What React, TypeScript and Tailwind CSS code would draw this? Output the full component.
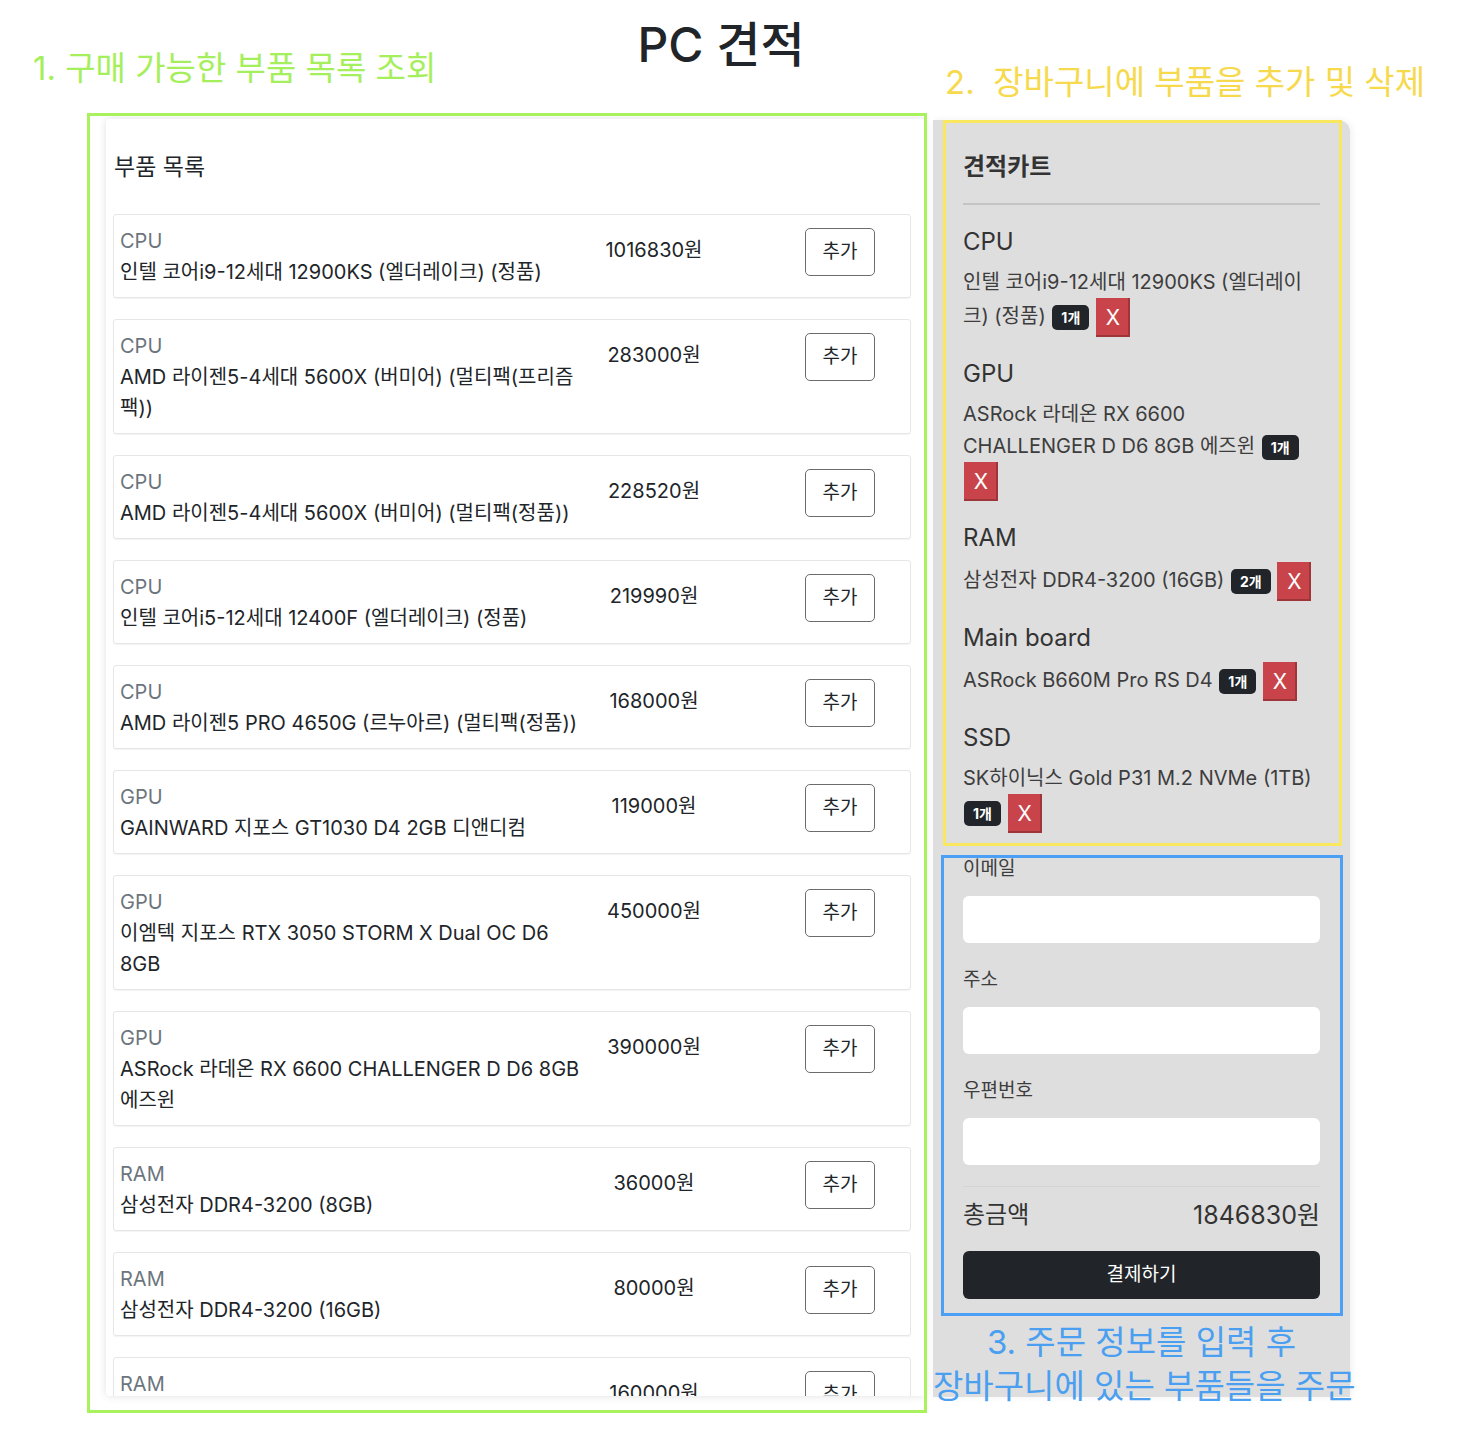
import React from "react";

const parts = [
  { category: "CPU", name: "인텔 코어i9-12세대 12900KS (엘더레이크) (정품)", price: 1016830 },
  { category: "CPU", name: "AMD 라이젠5-4세대 5600X (버미어) (멀티팩(프리즘팩))", price: 283000 },
  { category: "CPU", name: "AMD 라이젠5-4세대 5600X (버미어) (멀티팩(정품))", price: 228520 },
  { category: "CPU", name: "인텔 코어i5-12세대 12400F (엘더레이크) (정품)", price: 219990 },
  { category: "CPU", name: "AMD 라이젠5 PRO 4650G (르누아르) (멀티팩(정품))", price: 168000 },
  { category: "GPU", name: "GAINWARD 지포스 GT1030 D4 2GB 디앤디컴", price: 119000 },
  { category: "GPU", name: "이엠텍 지포스 RTX 3050 STORM X Dual OC D6 8GB", price: 450000 },
  { category: "GPU", name: "ASRock 라데온 RX 6600 CHALLENGER D D6 8GB 에즈윈", price: 390000 },
  { category: "RAM", name: "삼성전자 DDR4-3200 (8GB)", price: 36000 },
  { category: "RAM", name: "삼성전자 DDR4-3200 (16GB)", price: 80000 },
  { category: "RAM", name: "삼성전자 DDR4-3200 (32GB)", price: 160000 },
];

const cart = [
  { category: "CPU", name: "인텔 코어i9-12세대 12900KS (엘더레이크) (정품)", qty: 1 },
  { category: "GPU", name: "ASRock 라데온 RX 6600 CHALLENGER D D6 8GB 에즈윈", qty: 1 },
  { category: "RAM", name: "삼성전자 DDR4-3200 (16GB)", qty: 2 },
  { category: "Main board", name: "ASRock B660M Pro RS D4", qty: 1 },
  { category: "SSD", name: "SK하이닉스 Gold P31 M.2 NVMe (1TB)", qty: 1 },
];

const fields = ["이메일", "주소", "우편번호"];

const App = () => {
  return (
    <div className="relative w-[1462px] h-[1444px] overflow-hidden bg-white font-['Inter','Noto_Sans_CJK_KR',sans-serif]">
      {/* header */}
      <div className="h-[119px] pt-[16px] pr-[20px] text-center">
        <h1 className="text-[48px] leading-[58px] font-medium text-[#212529]">PC 견적</h1>
      </div>

      <div className="flex items-start">
        {/* parts list */}
        <div className="ml-[106px] w-[819px] h-[1277px] overflow-hidden bg-white rounded-[4px] shadow-[0_0_8px_rgba(0,0,0,0.12)] pt-[32px] pl-[7px] pr-[14px]">
          <h2 className="text-[23px] leading-[32px] text-[#212529] mb-[31px] pl-[1px]">부품 목록</h2>
          <div className="flex flex-col gap-[21px]">
            {parts.map((part, index) => (
              <div
                key={index}
                className="flex items-start border border-[#e6e6e6] rounded-[3px] pl-[6px] pt-[11px] pb-[9px] shadow-[0_1px_1px_rgba(0,0,0,0.05)]"
              >
                <div className="w-[466px] text-[20px] leading-[31px]">
                  <div className="text-[#6c757d]">{part.category}</div>
                  <div className="text-[#212529]">{part.name}</div>
                </div>
                <div className="w-[136px] mt-[9px] text-center text-[20px] leading-[31px] text-[#212529]">
                  {part.price}원
                </div>
                <button className="ml-auto mr-[35px] mt-[2px] w-[70px] h-[48px] bg-white border border-[#6c6c6c] rounded-[5px] text-[19px] text-[#212529]">
                  추가
                </button>
              </div>
            ))}
          </div>
        </div>

        {/* cart */}
        <div className="ml-[8px] mt-[1px] w-[417px] h-[1277px] bg-[#dedede] rounded-tr-[12px] shadow-[2px_0_6px_rgba(0,0,0,0.06)] pt-[31px] px-[30px]">
          <h2 className="text-[24px] leading-[32px] font-bold text-[#333]">견적카트</h2>
          <hr className="mt-[20px] mb-[21px] border-0 border-t-2 border-[#c4c4c4]" />

          <div className="flex flex-col gap-[21px]">
            {cart.map((item, index) => (
              <div key={index}>
                <h3 className="text-[24px] leading-[32px] text-[#333] mb-[8px]">{item.category}</h3>
                <div className="text-[20px] leading-[32px] text-[#3d3d3d]">
                  {item.name}{" "}
                  <span className="inline-block align-middle ml-[1px] px-[9px] rounded-[5px] bg-[#212529] text-white text-[14px] leading-[25px] font-bold">
                    {item.qty}개
                  </span>{" "}
                  <button className="inline-block align-middle ml-[1px] w-[34px] h-[39px] bg-[#c9444a] text-white text-[21px] leading-[39px] shadow-[inset_-2px_-2px_0_rgba(0,0,0,0.22)]">
                    X
                  </button>
                </div>
              </div>
            ))}
          </div>

          {/* order form */}
          <div className="mt-[20px]">
            {fields.map((label) => (
              <div key={label} className="mb-[21px]">
                <div className="text-[19px] leading-[32px] text-[#3d3d3d] mb-[11px]">{label}</div>
                <input className="block w-full h-[47px] rounded-[6px] bg-white outline-none px-3" />
              </div>
            ))}
            <div className="border-t border-[#d4d4d4] pt-[12px] flex items-center justify-between text-[24px] leading-[32px] text-[#333]">
              <span>총금액</span>
              <span className="text-[25px]">1846830원</span>
            </div>
            <button className="mt-[20px] w-full h-[48px] rounded-[6px] bg-[#212529] text-white text-[19px]">
              결제하기
            </button>
          </div>
        </div>
      </div>

      {/* annotations */}
      <div className="absolute left-[33px] top-[48px] text-[33px] leading-[40px] text-[#a6ef5c]">
        1. 구매 가능한 부품 목록 조회
      </div>
      <div className="absolute left-[945px] top-[62px] text-[33px] leading-[40px] text-[#f6d94c] whitespace-pre">
        2.  장바구니에 부품을 추가 및 삭제
      </div>
      <div className="absolute left-[87px] top-[113px] w-[840px] h-[1300px] border-[3px] border-[#a8f25e] pointer-events-none" />
      <div className="absolute left-[943px] top-[120px] w-[399px] h-[726px] border-[3px] border-[#f9e760] pointer-events-none" />
      <div className="absolute left-[941px] top-[855px] w-[402px] h-[461px] border-[3px] border-[#4ba0f5] pointer-events-none" />
      <div className="absolute left-[933px] top-[1320px] w-[417px] text-center text-[33px] leading-[44px] text-[#4b9ff0]">
        <div>3. 주문 정보를 입력 후</div>
        <div className="whitespace-nowrap">장바구니에 있는 부품들을 주문</div>
      </div>
    </div>
  );
};

export default App;
